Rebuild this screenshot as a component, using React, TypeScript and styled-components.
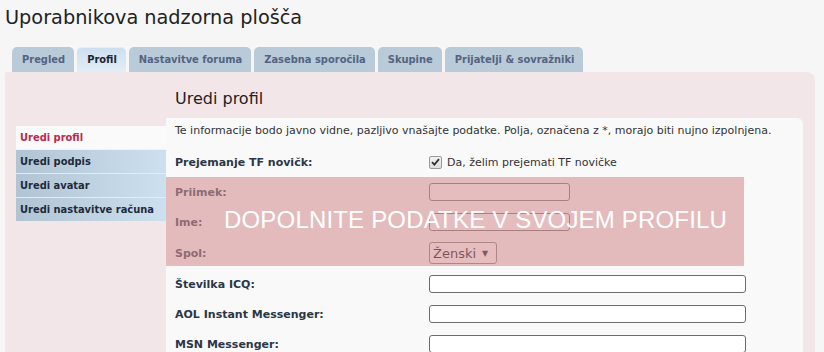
import React from "react";
import styled, { createGlobalStyle } from "styled-components";

const GlobalStyle = createGlobalStyle`
  html, body { margin: 0; padding: 0; }
  body {
    background: #f6f6f6;
    font-family: "DejaVu Sans", sans-serif;
    color: #333;
    overflow: hidden;
  }
`;

const Page = styled.div`
  width: 824px;
  height: 352px;
  padding: 0 9px 0 5px;
  box-sizing: border-box;
  overflow: hidden;
`;

const Title = styled.h1`
  margin: 0;
  padding-top: 6px;
  height: 47px;
  box-sizing: border-box;
  font-size: 19.3px;
  font-weight: normal;
  color: #222;
  line-height: 24px;
`;

const Tabs = styled.div`
  display: flex;
  gap: 3px;
  padding-left: 7px;
  height: 25px;
  align-items: flex-end;
  font-family: "DejaVu Sans Condensed", "DejaVu Sans", sans-serif;
`;

const Tab = styled.div<{ $active?: boolean }>`
  height: 25px;
  padding: 0 9px 0 10px;
  display: flex;
  align-items: center;
  border-radius: 5px 5px 0 0;
  font-size: 11px;
  font-weight: bold;
  color: ${(p) => (p.$active ? "#1c2433" : "#536482")};
  background: ${(p) =>
    p.$active ? "linear-gradient(#cbdff0, #e3edf5)" : "#b9cbd9"};
  box-shadow: ${(p) => (p.$active ? "inset 0 1px 0 #e6eef6" : "none")};
`;

const Panel = styled.div`
  background: #f3e6e8;
  border-radius: 2px 8px 0 0;
  padding: 0 12px 0 11px;
  height: 300px;
  display: grid;
  grid-template-columns: 150px 1fr;
`;

const Side = styled.ul`
  list-style: none;
  margin: 54px 0 0;
  padding: 0;
  font-family: "DejaVu Sans Condensed", "DejaVu Sans", sans-serif;
`;

const SideItem = styled.li<{ $active?: boolean }>`
  height: 23px;
  border-bottom: 1px solid ${(p) => (p.$active ? "#f0f3f6" : "#e4ecf2")};
  padding-left: 4px;
  display: flex;
  align-items: center;
  font-size: 11px;
  font-weight: bold;
  color: ${(p) => (p.$active ? "#bc2a4d" : "#1e2b3c")};
  background: ${(p) =>
    p.$active ? "#fafafa" : "linear-gradient(90deg, #b1c4d4, #cde0ef)"};
`;

const Main = styled.div`
  display: flex;
  flex-direction: column;
`;

const Heading = styled.h2`
  margin: 0;
  height: 46px;
  padding: 17px 0 0 9px;
  box-sizing: border-box;
  font-size: 16px;
  font-weight: normal;
  color: #222;
  line-height: 20px;
`;

const Box = styled.div`
  background: #f9f9f9;
  border-radius: 0 6px 0 0;
  position: relative;
  flex: 1;
`;

const Intro = styled.p`
  margin: 0;
  height: 29px;
  padding: 6px 0 0 9px;
  box-sizing: border-box;
  font-size: 11px;
  line-height: 14px;
  color: #333;
`;

const Row = styled.div<{ $tall?: boolean }>`
  display: grid;
  grid-template-columns: 254px 1fr;
  align-items: center;
  padding: ${(p) => (p.$tall ? "5px 0 5px 9px" : "6px 0 6px 9px")};
  min-height: 18px;
`;

const Label = styled.label`
  font-size: 11px;
  font-weight: bold;
  color: #2b3647;
`;

const CheckWrap = styled.div`
  display: flex;
  align-items: center;
  gap: 5px;
  font-size: 11px;
  color: #333;
`;

const CheckBox = styled.span`
  width: 11px;
  height: 11px;
  border: 1px solid #9a9a9a;
  border-radius: 2px;
  background: linear-gradient(#f2f2f2, #dcdcdc);
  display: flex;
  align-items: center;
  justify-content: center;
`;

const TextInput = styled.div<{ $w: number }>`
  width: ${(p) => p.$w}px;
  height: 18px;
  box-sizing: border-box;
  border: 1px solid #6c6c6c;
  border-radius: 3px;
  background: #fff;
`;

const Select = styled.div`
  width: 68px;
  height: 22px;
  box-sizing: border-box;
  border: 1px solid #7a7a7a;
  border-radius: 3px;
  background: #fff;
  display: flex;
  align-items: center;
  gap: 6px;
  padding-left: 3px;
  font-size: 13px;
  color: #000;
`;

const Arrow = styled.span`
  font-size: 8px;
  color: #111;
`;

const Overlay = styled.div`
  position: absolute;
  left: 0;
  top: 59px;
  width: 578px;
  height: 89px;
  background: rgba(210, 142, 146, 0.59);
  pointer-events: none;
`;

const OverlayText = styled.div`
  position: absolute;
  left: 58px;
  top: 30px;
  font-family: "Liberation Sans", Arial, sans-serif;
  font-size: 24px;
  letter-spacing: 0.18px;
  line-height: 26px;
  color: #fff;
  white-space: nowrap;
`;

const tabs = [
  "Pregled",
  "Profil",
  "Nastavitve foruma",
  "Zasebna sporočila",
  "Skupine",
  "Prijatelji & sovražniki",
];

const sideItems = [
  "Uredi profil",
  "Uredi podpis",
  "Uredi avatar",
  "Uredi nastavitve računa",
];

export default function App() {
  return (
    <>
      <GlobalStyle />
      <Page>
        <Title>Uporabnikova nadzorna plošča</Title>
        <Tabs>
          {tabs.map((t) => (
            <Tab key={t} $active={t === "Profil"}>
              {t}
            </Tab>
          ))}
        </Tabs>
        <Panel>
          <Side>
            {sideItems.map((s, i) => (
              <SideItem key={s} $active={i === 0}>
                {s}
              </SideItem>
            ))}
          </Side>
          <Main>
            <Heading>Uredi profil</Heading>
            <Box>
              <Intro>
                Te informacije bodo javno vidne, pazljivo vnašajte podatke. Polja,
                označena z *, morajo biti nujno izpolnjena.
              </Intro>
              <Row>
                <Label>Prejemanje TF novičk:</Label>
                <CheckWrap>
                  <CheckBox>
                    <svg width="9" height="8" viewBox="0 0 9 8">
                      <path
                        d="M1 4.2 L3.4 6.6 L8 1.2"
                        fill="none"
                        stroke="#333"
                        strokeWidth="1.8"
                      />
                    </svg>
                  </CheckBox>
                  Da, želim prejemati TF novičke
                </CheckWrap>
              </Row>
              <Row>
                <Label>Priimek:</Label>
                <TextInput $w={141} />
              </Row>
              <Row>
                <Label>Ime:</Label>
                <TextInput $w={141} />
              </Row>
              <Row $tall>
                <Label>Spol:</Label>
                <Select>
                  Ženski <Arrow>▼</Arrow>
                </Select>
              </Row>
              <Row>
                <Label>Številka ICQ:</Label>
                <TextInput $w={317} />
              </Row>
              <Row>
                <Label>AOL Instant Messenger:</Label>
                <TextInput $w={317} />
              </Row>
              <Row>
                <Label>MSN Messenger:</Label>
                <TextInput $w={317} />
              </Row>
              <Overlay>
                <OverlayText>DOPOLNITE PODATKE V SVOJEM PROFILU</OverlayText>
              </Overlay>
            </Box>
          </Main>
        </Panel>
      </Page>
    </>
  );
}
